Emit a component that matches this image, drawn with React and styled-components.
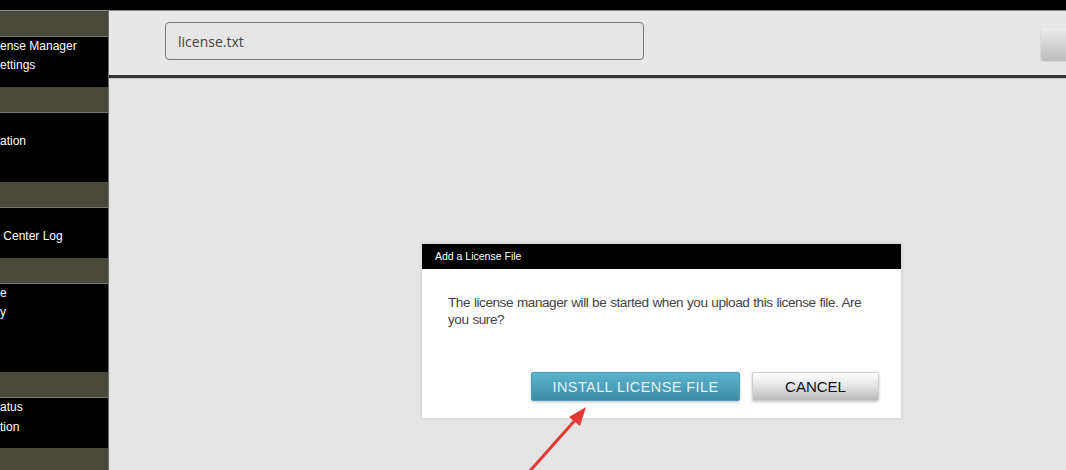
import React from 'react';
import styled, { createGlobalStyle } from 'styled-components';

const GlobalStyle = createGlobalStyle`
  html, body {
    margin: 0;
    padding: 0;
    background: #e5e5e5;
    overflow: hidden;
  }
  * { box-sizing: border-box; }
`;

const Page = styled.div`
  position: relative;
  width: 1066px;
  height: 470px;
  display: flex;
  flex-direction: column;
  font-family: "Liberation Sans", Arial, sans-serif;
  overflow: hidden;
`;

const TopBar = styled.div`
  height: 11px;
  flex-shrink: 0;
  background: #000;
  border-bottom: 1px solid #8a8a8a;
`;

const Body = styled.div`
  flex: 1;
  display: flex;
  min-height: 0;
`;

const Sidebar = styled.div`
  width: 109px;
  flex-shrink: 0;
  background: #000;
  border-right: 1px solid #6e6e6e;
  display: flex;
  flex-direction: column;
  overflow: hidden;
`;

const Band = styled.div`
  height: 26px;
  flex-shrink: 0;
  background: #48483b;
  border-bottom: 1px solid #77776e;
`;

const Group = styled.div`
  padding: 0 0 11px 0;
  flex-shrink: 0;
`;

const Item = styled.div`
  height: 19.4px;
  line-height: 19.4px;
  color: #fff;
  font-size: 12px;
  white-space: pre;
`;

const Main = styled.div`
  flex: 1;
  display: flex;
  flex-direction: column;
  overflow: hidden;
  background: #e5e5e5;
`;

const Header = styled.div`
  height: 67px;
  flex-shrink: 0;
  background: #e8e8e8;
  border-bottom: 3px solid #333;
  display: flex;
  align-items: center;
  padding: 0 0 4px 56px;
  gap: 397px;
`;

const FileInput = styled.div`
  width: 479px;
  height: 38px;
  flex-shrink: 0;
  border: 1px solid #767676;
  border-radius: 4px;
  background: #e6e6e6;
  display: flex;
  align-items: center;
  padding-left: 12px;
  font-family: "Open Sans", "Liberation Sans", sans-serif;
  font-size: 14px;
  color: #444;
`;

const BrowseButton = styled.div`
  width: 70px;
  height: 32px;
  flex-shrink: 0;
  margin-top: 6px;
  border-radius: 3px;
  background: linear-gradient(#ececec, #bdbdbd);
  box-shadow: 0 1px 2px rgba(0, 0, 0, 0.25);
`;

const Content = styled.div`
  flex: 1;
  border-top: 1px solid #c4c4c4;
  padding: 164px 0 0 312px;
`;

const Dialog = styled.div`
  width: 481px;
  background: #fff;
  border: 1px solid #dcdcdc;
  box-shadow: 0 0 3px rgba(0, 0, 0, 0.08);
`;

const DialogTitle = styled.div`
  height: 25px;
  background: #000;
  color: #fff;
  font-size: 10.5px;
  line-height: 25px;
  padding-left: 13px;
`;

const DialogBody = styled.div`
  padding: 25px 22px 17px 26px;
`;

const Message = styled.p`
  margin: 0 8px 0 0;
  font-size: 13.6px;
  letter-spacing: -0.45px;
  word-spacing: 0.5px;
  line-height: 17px;
  color: #444;
`;

const Actions = styled.div`
  display: flex;
  justify-content: flex-end;
  gap: 12px;
  margin-top: 44px;
`;

const Button = styled.div`
  height: 29px;
  width: ${(p) => p.width}px;
  display: flex;
  align-items: center;
  justify-content: center;
  border-radius: 2px;
  font-size: ${(p) => (p.primary ? '14.5px' : '15px')};
  letter-spacing: ${(p) => (p.primary ? '0.4px' : '0')};
  color: ${(p) => (p.primary ? '#e2f1f5' : '#111')};
  background: ${(p) =>
    p.primary
      ? 'linear-gradient(#5cb4cc, #3f8ca4)'
      : 'linear-gradient(#ffffff, #e6e6e6 45%, #b9b9b9)'};
  border: 1px solid ${(p) => (p.primary ? '#4a9bb3' : '#d0d0d0')};
  box-shadow: 0 1px 3px rgba(0, 0, 0, 0.25);
`;

const Annotation = styled.svg`
  position: absolute;
  left: 0;
  top: 0;
  pointer-events: none;
`;

const sections = [
  ['ense Manager', 'ettings'],
  ['', 'ation', ''],
  ['', ' Center Log'],
  ['e', 'y', '', ''],
  ['atus', 'tion'],
];

export default function App() {
  return (
    <Page>
      <GlobalStyle />
      <TopBar />
      <Body>
        <Sidebar>
          {sections.map((rows, i) => (
            <React.Fragment key={i}>
              <Band />
              <Group>
                {rows.map((r, j) => (
                  <Item key={j}>{r}</Item>
                ))}
              </Group>
            </React.Fragment>
          ))}
          <Band />
        </Sidebar>
        <Main>
          <Header>
            <FileInput>license.txt</FileInput>
            <BrowseButton />
          </Header>
          <Content>
            <Dialog>
              <DialogTitle>Add a License File</DialogTitle>
              <DialogBody>
                <Message>
                  The license manager will be started when you upload this license file. Are you sure?
                </Message>
                <Actions>
                  <Button primary width={209}>INSTALL LICENSE FILE</Button>
                  <Button width={127}>CANCEL</Button>
                </Actions>
              </DialogBody>
            </Dialog>
          </Content>
        </Main>
      </Body>
      <Annotation width="1066" height="470" viewBox="0 0 1066 470">
        <line x1="529" y1="472" x2="577" y2="418" stroke="#e53935" strokeWidth="3" strokeLinecap="round" />
        <polygon points="586,407 569,417 580,426" fill="#e53935" />
      </Annotation>
    </Page>
  );
}
